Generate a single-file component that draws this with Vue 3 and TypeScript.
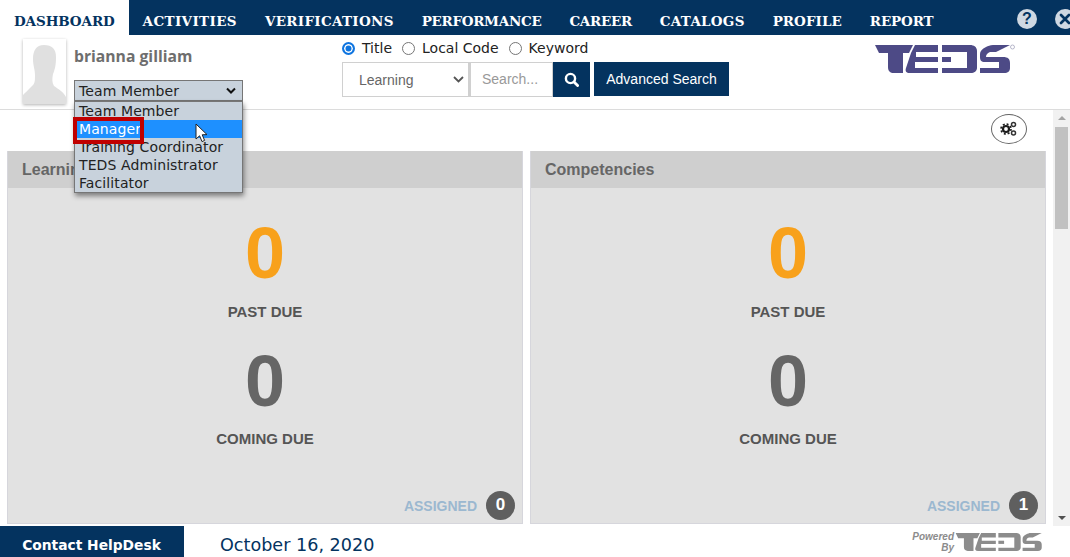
<template>
  <div class="page">
    <!-- 顶部导航 -->
    <nav class="topnav">
      <a
        v-for="(item, i) in navItems"
        :key="item.label"
        class="nav-item"
        :class="{ active: i === 0 }"
        :style="{ letterSpacing: item.spacing + 'px' }"
      >{{ item.label }}</a>
      <div class="nav-icons">
        <span class="round-btn">?</span>
        <span class="round-btn close">
          <svg width="12" height="12" viewBox="0 0 12 12"><path d="M2 2 L10 10 M10 2 L2 10" stroke="#04335f" stroke-width="2.6" stroke-linecap="round" /></svg>
        </span>
      </div>
    </nav>

    <!-- 用户与搜索 -->
    <header class="subhead">
      <div class="avatar">
        <svg width="43" height="65" viewBox="0 0 43 65">
          <path d="M21 6 C13 6 10 12 10 20 C10 27 12 30 12 36 C12 42 12 45 8 48 C5 51 2 54 0 56 L0 65 L43 65 L43 58 C40 52 35 50 31 47 C29 44 29 40 30 35 C32 30 33 26 33 18 C33 10 29 6 21 6 Z" fill="#e0e0e0" />
        </svg>
      </div>
      <div class="user">
        <div class="user-name">brianna gilliam</div>
        <div class="role-select">
          <span>Team Member</span>
          <svg width="12" height="8" viewBox="0 0 12 8"><path d="M2 1.5 L6 5.5 L10 1.5" fill="none" stroke="#111" stroke-width="2" /></svg>
        </div>
        <div class="role-menu">
          <div v-for="role in roles" :key="role" class="role-option" :class="{ hover: role === 'Manager' }">{{ role }}</div>
          <span class="highlight-box"></span>
          <svg class="cursor" width="14" height="21" viewBox="0 0 14 21">
            <path d="M1 1 L1 16 L4.6 12.8 L7 18.6 L9.6 17.4 L7.2 11.8 L12 11.6 Z" fill="#fff" stroke="#222" stroke-width="1" />
          </svg>
        </div>
      </div>
      <div class="search">
        <div class="radios">
          <label v-for="(r, i) in searchTypes" :key="r" class="radio">
            <span class="dot" :class="{ on: i === 0 }"></span>{{ r }}
          </label>
        </div>
        <div class="search-row">
          <div class="search-type">
            <span>Learning</span>
            <svg width="11" height="7" viewBox="0 0 11 7"><path d="M1 1 L5.5 5.5 L10 1" fill="none" stroke="#555" stroke-width="1.8" /></svg>
          </div>
          <div class="search-input">Search...</div>
          <button class="search-btn">
            <svg width="15" height="15" viewBox="0 0 15 15"><circle cx="6.5" cy="6.5" r="4.6" fill="none" stroke="#fff" stroke-width="2.4" /><path d="M10 10 L13.6 13.6" stroke="#fff" stroke-width="2.8" stroke-linecap="round" /></svg>
          </button>
          <button class="adv-btn">Advanced Search</button>
        </div>
      </div>
      <div class="logo">
        <svg width="150" height="40" viewBox="0 0 150 40">
          <path v-for="d in logoPaths" :key="d" :d="d" fill="#4d4a86" />
          <circle cx="142.5" cy="7" r="2" fill="none" stroke="#a5a5bd" stroke-width="0.8" />
        </svg>
      </div>
    </header>

    <div class="content-wrap">
      <main class="content">
        <div class="tools">
          <span class="gear-btn">
            <svg width="18" height="16" viewBox="0 0 18 16">
              <circle cx="6" cy="8" r="3" fill="none" stroke="#1c1c1c" stroke-width="2.2" />
              <circle cx="6" cy="8" r="5" fill="none" stroke="#1c1c1c" stroke-width="1.6" stroke-dasharray="2 1.93" />
              <circle cx="13.5" cy="3.5" r="2" fill="none" stroke="#333" stroke-width="1.5" />
              <circle cx="13.5" cy="12" r="2" fill="none" stroke="#333" stroke-width="1.5" />
            </svg>
          </span>
        </div>
        <div class="cards">
          <section v-for="card in cards" :key="card.title" class="card">
            <h2 class="card-title">{{ card.title }}</h2>
            <div class="card-body">
              <div class="big orange">0</div>
              <div class="stat-label past">PAST DUE</div>
              <div class="big grey">0</div>
              <div class="stat-label coming">COMING DUE</div>
              <div class="assigned">
                <span class="assigned-label">ASSIGNED</span>
                <span class="badge">{{ card.assigned }}</span>
              </div>
            </div>
          </section>
        </div>
      </main>
      <div class="scrollbar">
        <span class="arrow up"></span>
        <div class="track"><div class="thumb"></div></div>
        <span class="arrow down"></span>
      </div>
    </div>

    <footer class="footer">
      <div class="helpdesk">Contact HelpDesk</div>
      <div class="date">October 16, 2020</div>
      <div class="powered">
        <span class="powered-text">Powered<br />By</span>
        <svg width="88" height="20" viewBox="4 4 138 30">
          <path v-for="d in logoPaths" :key="d" :d="d" fill="#8c8c8c" />
        </svg>
      </div>
    </footer>
  </div>
</template>

<script setup lang="ts">
const navItems = [
  { label: 'DASHBOARD', spacing: -0.1 },
  { label: 'ACTIVITIES', spacing: 0.35 },
  { label: 'VERIFICATIONS', spacing: 0.3 },
  { label: 'PERFORMANCE', spacing: -0.3 },
  { label: 'CAREER', spacing: -0.3 },
  { label: 'CATALOGS', spacing: 0.25 },
  { label: 'PROFILE', spacing: 0.05 },
  { label: 'REPORT', spacing: -0.15 },
]
const roles: string[] = ['Team Member', 'Manager', 'Training Coordinator', 'TEDS Administrator', 'Facilitator']
const searchTypes: string[] = ['Title', 'Local Code', 'Keyword']
const cards = [
  { title: 'Learning', assigned: 0 },
  { title: 'Competencies', assigned: 1 },
]

// 品牌标志的色块
const logoPaths: string[] = [
  'M5 5 H43 L39 13 H33 V33 H24 C20 33 18 31 18 27 V13 H9 Z',
  'M45 5 H68 V12 H46 V17 H68 V22 H45 V28 H68 V33 H40 C36 33 35 31 36 28 L41 13 Z',
  'M72 5 H100 C104 5 107 7 107 11 V28 C107 31 104 33 101 33 H72 V28 H97 V12 H72 Z',
  'M72 17 H81 V22 H72 Z',
  'M116 7 C118 6 120 5 123 5 H140 L126 12 H120 C117 13 116 15 116 17 H133 C138 17 140 19 140 23 V28 C140 31 138 33 134 33 H110 V28 H129 V22 H115 C111 22 110 20 110 17 V14 C110 11 112 9 116 7 Z',
]
</script>

<style>
html, body { margin: 0; overflow: hidden; background: #fff; }
</style>

<style scoped>
.page {
  width: 1070px;
  height: 557px;
  display: flex;
  flex-direction: column;
  overflow: hidden;
  font-family: "DejaVu Sans", Verdana, sans-serif;
}

/* ===== nav ===== */
.topnav {
  height: 35px;
  flex: none;
  background: #04335f;
  display: flex;
  align-items: stretch;
  position: relative;
}
.nav-item {
  padding: 0 14px;
  line-height: 43px;
  height: 35px;
  overflow: hidden;
  font-family: "DejaVu Serif", serif;
  font-weight: 700;
  font-size: 13.5px;
  color: #fff;
  white-space: nowrap;
}
.nav-item.active {
  background: #fff;
  color: #04335f;
}
.nav-icons {
  position: absolute;
  left: 1017px;
  top: 9px;
  display: flex;
  gap: 18px;
}
.round-btn {
  width: 20px;
  height: 20px;
  border-radius: 50%;
  background: #cfd8e2;
  color: #04335f;
  font: 700 16px/20px "Liberation Sans", sans-serif;
  text-align: center;
  display: flex;
  align-items: center;
  justify-content: center;
  flex: none;
}

/* ===== header ===== */
.subhead {
  height: 75px;
  flex: none;
  box-sizing: border-box;
  border-bottom: 1px solid #dcdcdc;
  position: relative;
  display: flex;
}
.avatar {
  width: 43px;
  height: 65px;
  margin: 4px 0 0 23px;
  background: #fff;
  box-shadow: 0 1px 3px rgba(0, 0, 0, 0.3);
  overflow: hidden;
  flex: none;
  display: flex;
  align-items: flex-end;
}
.user {
  width: 268px;
  margin-left: 8px;
  flex: none;
  position: relative;
}
.user-name {
  margin-top: 12px;
  font: 700 15.7px/18px "Open Sans", sans-serif;
  color: #6e6e6e;
}
.role-select {
  position: absolute;
  left: 0;
  top: 45px;
  width: 169px;
  height: 21px;
  box-sizing: border-box;
  border: 1px solid #767676;
  background: #c8d2dc;
  font-size: 14px;
  letter-spacing: 0.1px;
  line-height: 19px;
  padding: 1px 5px 0 4px;
  color: #222;
  display: flex;
  justify-content: space-between;
  align-items: center;
}
.role-menu {
  position: absolute;
  left: 0;
  top: 66px;
  width: 169px;
  height: 92px;
  box-sizing: border-box;
  border: 1px solid #767676;
  background: #c8d2dc;
  box-shadow: 1px 3px 5px rgba(0, 0, 0, 0.45);
  z-index: 5;
  font-size: 14px;
  letter-spacing: 0.1px;
  color: #222;
}
.role-option {
  height: 18px;
  line-height: 18px;
  padding: 0 4px;
  white-space: nowrap;
}
.role-option.hover {
  background: #1e90ff;
  color: #fff;
}
.highlight-box {
  position: absolute;
  left: -2px;
  top: 15px;
  width: 71px;
  height: 27px;
  box-sizing: border-box;
  border: 4px solid #c00000;
}
.cursor {
  position: absolute;
  left: 120px;
  top: 21px;
}
.search {
  width: 400px;
  flex: none;
}
.radios {
  display: flex;
  gap: 10px;
  height: 26px;
  margin-bottom: 1px;
  align-items: center;
  font-size: 14px;
  color: #222;
}
.radio {
  display: flex;
  align-items: center;
  gap: 7px;
}
.dot {
  width: 13px;
  height: 13px;
  box-sizing: border-box;
  border-radius: 50%;
  border: 1px solid #767676;
  background: #fff;
}
.dot.on {
  border: 2px solid #0f75e0;
  box-shadow: inset 0 0 0 1.5px #fff;
  background: #0f75e0;
}
.search-row {
  display: flex;
  align-items: flex-start;
  height: 35px;
}
.search-type {
  width: 127px;
  height: 35px;
  box-sizing: border-box;
  border: 1px solid #d0d0d0;
  display: flex;
  align-items: center;
  justify-content: space-between;
  padding: 0 4px 0 16px;
  font: 14px "Liberation Sans", sans-serif;
  color: #666;
}
.search-input {
  width: 84px;
  height: 35px;
  box-sizing: border-box;
  border: 1px solid #d0d0d0;
  border-left-width: 2px;
  padding-left: 11px;
  font: 14px/33px "Liberation Sans", sans-serif;
  color: #999;
}
.search-btn {
  width: 37px;
  height: 35px;
  padding: 0;
  border: none;
  background: #04335f;
  display: flex;
  align-items: center;
  justify-content: center;
}
.adv-btn {
  width: 135px;
  height: 34px;
  margin-left: 4px;
  padding: 0;
  border: none;
  background: #04335f;
  color: #fff;
  font: 14px "Liberation Sans", sans-serif;
}
.logo {
  position: absolute;
  left: 870px;
  top: 5px;
  line-height: 0;
}

/* ===== content ===== */
.content-wrap {
  flex: 1;
  min-height: 0;
  display: flex;
  overflow: hidden;
}
.content {
  flex: 1;
  padding: 0 7px;
  min-width: 0;
}
.tools {
  height: 41px;
  display: flex;
  justify-content: flex-end;
  align-items: flex-start;
  padding: 4px 19px 0 0;
  box-sizing: border-box;
}
.gear-btn {
  width: 36px;
  height: 30px;
  box-sizing: border-box;
  border: 1px solid #666;
  border-radius: 50%;
  display: flex;
  align-items: center;
  justify-content: center;
}
.cards {
  display: flex;
  gap: 7px;
}
.card {
  width: 516px;
  height: 373px;
  box-sizing: border-box;
  background: #e2e2e2;
  border: 1px solid #d6d6dc;
  border-top: none;
  font-family: "Liberation Sans", sans-serif;
}
.card-title {
  margin: 0;
  height: 37px;
  box-sizing: border-box;
  background: #cfcfcf;
  padding-left: 14px;
  font: 700 16px/38px "Liberation Sans", sans-serif;
  color: #666;
}
.card-body {
  display: flex;
  flex-direction: column;
  align-items: center;
  position: relative;
  height: 335px;
}
.big {
  font: 700 72px/84px "Liberation Sans", sans-serif;
}
.big.orange {
  margin-top: 23px;
  color: #f8a11b;
}
.big.grey {
  margin-top: 18px;
  color: #666;
}
.stat-label {
  font: 700 15px/18px "Liberation Sans", sans-serif;
  color: #555;
}
.stat-label.past {
  margin-top: 8px;
}
.stat-label.coming {
  margin-top: 7px;
}
.assigned {
  position: absolute;
  right: 7px;
  bottom: 3px;
  display: flex;
  align-items: center;
  gap: 9px;
}
.assigned-label {
  font: 700 14px "Liberation Sans", sans-serif;
  color: #9bb8d0;
}
.badge {
  width: 29px;
  height: 29px;
  border-radius: 50%;
  background: #5f5f5f;
  color: #fff;
  font: 700 17px/28px "Liberation Sans", sans-serif;
  text-align: center;
}

/* ===== scrollbar ===== */
.scrollbar {
  width: 17px;
  flex: none;
  background: #f1f1f1;
  display: flex;
  flex-direction: column;
  align-items: center;
}
.arrow {
  width: 0;
  height: 0;
  flex: none;
  border-left: 4px solid transparent;
  border-right: 4px solid transparent;
}
.arrow.up {
  margin: 6px 0 7px;
  border-bottom: 4px solid #a3a3a3;
}
.arrow.down {
  margin: 5px 0 6px;
  border-top: 4px solid #505050;
}
.track {
  flex: 1;
  width: 100%;
  display: flex;
  justify-content: center;
}
.thumb {
  width: 13px;
  height: 102px;
  background: #c1c1c1;
}

/* ===== footer ===== */
.footer {
  height: 31px;
  flex: none;
  display: flex;
  align-items: center;
  position: relative;
}
.helpdesk {
  width: 184px;
  height: 31px;
  padding-right: 1px;
  box-sizing: border-box;
  background: #04335f;
  color: #fff;
  font: 700 13.8px/38px "DejaVu Sans", sans-serif;
  text-align: center;
  flex: none;
}
.date {
  margin-left: 36px;
  font-size: 17.6px;
  line-height: 39px;
  height: 31px;
  color: #04335f;
}
.powered {
  margin-left: auto;
  margin-right: 27px;
  display: flex;
  align-items: center;
  gap: 1px;
}
.powered-text {
  font: italic 700 10px/11px "Liberation Sans", sans-serif;
  color: #8c8c8c;
  text-align: right;
}
</style>
